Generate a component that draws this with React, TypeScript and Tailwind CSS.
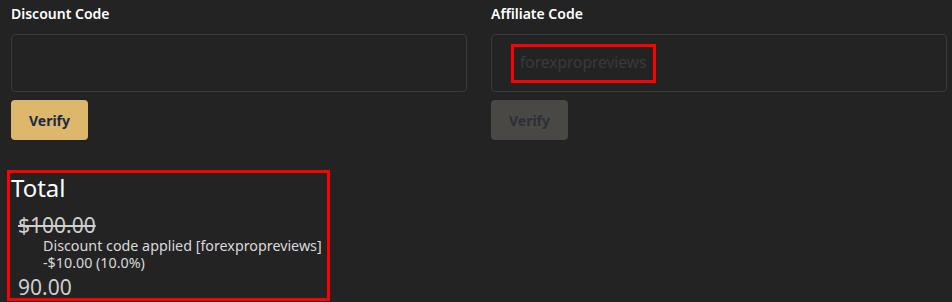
import React from 'react';

function CodeField({
  label,
  placeholder,
  disabled,
}: {
  label: string;
  placeholder?: string;
  disabled?: boolean;
}) {
  return (
    <div className="flex flex-col">
      <label className="h-[20px] text-[14px] font-semibold leading-[20px] text-white">{label}</label>
      <div className="mt-[10px] flex h-[58px] items-center rounded-[4px] border border-[#3b3b3b] bg-[#232323] pl-[19px]">
        {placeholder && (
          <div className="flex h-[39px] items-center border-[3px] border-[#ff0000] pl-[6px] pr-[7px] text-[15.5px] text-[#3a3a3a]">
            {placeholder}
          </div>
        )}
      </div>
      <button
        disabled={disabled}
        className={
          disabled
            ? 'mt-[8px] h-[40px] w-[77px] rounded-[4px] bg-[#4a4845] text-[14px] font-bold text-[#2c3036]'
            : 'mt-[8px] h-[40px] w-[77px] rounded-[4px] bg-[#dcb76c] text-[14px] font-bold text-[#1b2a3e]'
        }
      >
        Verify
      </button>
    </div>
  );
}

export default function App() {
  return (
    <div
      className="h-[302px] w-[952px] overflow-hidden bg-[#232323] pl-[11px] pr-[5px] pt-[4px]"
      style={{ fontFamily: '"Noto Sans", sans-serif' }}
    >
      <div className="grid grid-cols-2 gap-[24px]">
        <CodeField label="Discount Code" />
        <CodeField label="Affiliate Code" placeholder="forexpropreviews" disabled />
      </div>

      <div className="-ml-[4px] mt-[30px] h-[131px] w-[323px] border-[3px] border-[#ff0000] pl-[1px]">
        <div className="text-[24px] leading-[30px] text-white">Total</div>
        <div className="pl-[7px] pt-[11px]">
          <div className="text-[21px] leading-[23px] text-[#cfcfcf] line-through">$100.00</div>
          <div className="pl-[25px] text-[14.3px] leading-[17px] text-[#d9d9d9]">
            <div>Discount code applied [forexpropreviews]</div>
            <div>-$10.00 (10.0%)</div>
          </div>
          <div className="mt-[4px] text-[21px] leading-[24px] text-[#cfcfcf]">90.00</div>
        </div>
      </div>
    </div>
  );
}
